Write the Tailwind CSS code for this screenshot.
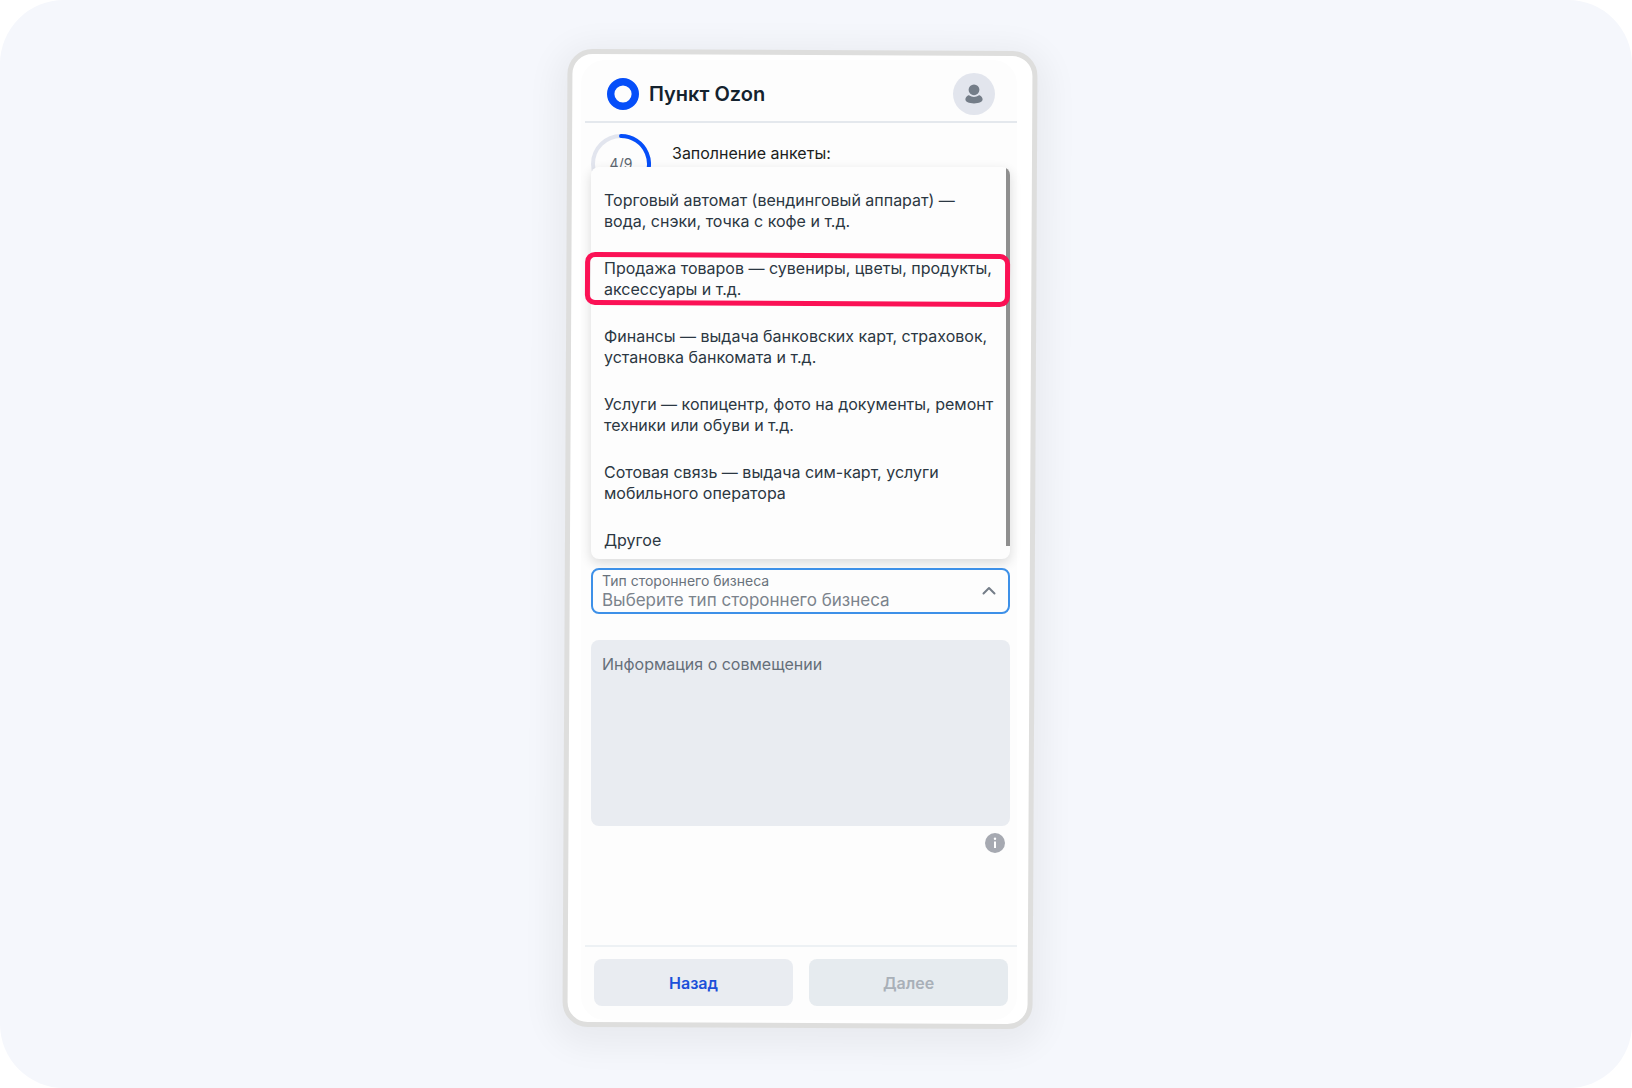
<!DOCTYPE html>
<html lang="ru">
<head>
    <meta charset="UTF-8">
    <meta name="viewport" content="width=device-width, initial-scale=1.0">
    <title>Пункт Ozon</title>
    <script src="https://cdn.jsdelivr.net/npm/@tailwindcss/browser@4"></script>
</head>
<body class="bg-white font-['Inter','Noto_Sans',sans-serif] text-[#2b3742]">
    <main class="flex min-h-screen justify-center rounded-[64px] bg-[#f5f7fc] pt-[50px] pr-8 pb-[60px]">
        <div class="relative flex w-[470px] flex-col pt-[10px] pr-[18px] pb-2 pl-4">
            <!-- Phone frame, slightly tilted -->
            <div class="absolute inset-0 rotate-[0.3deg] rounded-[25px] border-[5px] border-[#dededd] bg-white shadow-[0_8px_32px_12px_rgba(0,0,0,0.05)]"></div>

            <div class="relative flex grow flex-col rounded-[24px] bg-[#fdfdfd]">
                <!-- Header -->
                <header class="ml-1 flex h-[63px] items-center border-b-2 border-[#e4e8ed] px-[22px] pt-[7px]">
                    <svg class="size-8" viewBox="0 0 32 32" fill="none">
                        <circle cx="16" cy="16" r="12.3" stroke="#054ef9" stroke-width="7.4"/>
                    </svg>
                    <h1 class="ml-[10px] text-[20px] leading-6 font-semibold text-[#14222e]">Пункт Ozon</h1>
                    <button type="button" aria-label="Профиль" class="ml-auto flex size-[42px] items-center justify-center rounded-full bg-[#e2e5ed]">
                        <svg class="size-5" viewBox="0 0 20 20" fill="#747d88">
                            <circle cx="10" cy="5.8" r="5.4"/>
                            <path d="M5.400 11.500C6.700 12.400 8.300 12.900 10 12.900s3.300-.5 4.600-1.400c.5-.3.900-.2 1.400.1 1.600.9 2.600 2.400 2.600 4 0 2.400-3.400 3.800-8.600 3.800s-8.600-1.400-8.600-3.800c0-1.600 1-3.100 2.600-4 .5-.3.900-.4 1.400-.1z"/>
                        </svg>
                    </button>
                </header>

                <form class="flex grow flex-col">
                    <div class="flex grow flex-col pr-[7px] pl-[10px]">
                        <!-- Progress -->
                        <div class="flex items-start gap-[21px] pt-[11px]">
                            <div class="relative size-[60px]">
                                <svg class="size-full" viewBox="0 0 60 60" fill="none" stroke-width="4">
                                    <circle cx="30" cy="30" r="28" stroke="#e2e5ee"/>
                                    <path d="M30 2a28 28 0 0 1 20 47.600" stroke="#054ef9" stroke-linecap="round"/>
                                </svg>
                                <span class="absolute inset-0 flex items-center justify-center text-[14px] leading-[18px] text-[#5c6670]">4/9</span>
                            </div>
                            <p class="pt-2 text-[16px] leading-[22px] text-[#1c1e20]">Заполнение анкеты:</p>
                        </div>

                        <!-- Open list of options -->
                        <div class="relative -mt-[27px] flex h-[392px] overflow-hidden rounded-lg bg-[#fdfdfd] shadow-[0_4px_12px_rgba(0,0,0,0.14)]">
                            <ul role="listbox" aria-label="Тип стороннего бизнеса" class="flex grow flex-col gap-[26px] pt-[23px] pl-[13px] text-[16px] leading-[21px] whitespace-nowrap">
                                <li role="option">Торговый автомат (вендинговый аппарат) —<br>вода, снэки, точка с кофе и т.д.</li>
                                <li role="option">Продажа товаров — сувениры, цветы, продукты,<br>аксессуары и т.д.</li>
                                <li role="option">Финансы — выдача банковских карт, страховок,<br>установка банкомата и т.д.</li>
                                <li role="option">Услуги — копицентр, фото на документы, ремонт<br>техники или обуви и т.д.</li>
                                <li role="option">Сотовая связь — выдача сим-карт, услуги<br>мобильного оператора</li>
                                <li role="option">Другое</li>
                            </ul>
                            <div class="mb-[13px] w-1 shrink-0 bg-[#8f8f8f]"></div>
                        </div>

                        <div class="relative mt-[9px] h-[46px] rounded-lg border-2 border-[#3d90e8] bg-[#fdfdfd] px-[9px] pt-[2px]">
                            <label for="business" class="block text-[14px] leading-[18px] text-[#69727c]">Тип стороннего бизнеса</label>
                            <select id="business" class="block w-full appearance-none bg-transparent text-[17px] leading-5 text-[#7b838c]">
                                <option>Выберите тип стороннего бизнеса</option>
                            </select>
                            <svg class="pointer-events-none absolute top-[13px] right-[11px] size-4" viewBox="0 0 16 16" fill="none" stroke="#747d88" stroke-width="2" stroke-linecap="round" stroke-linejoin="round">
                                <path d="M2.500 10.500 8 5l5.500 5.500"/>
                            </svg>
                        </div>

                        <textarea aria-label="Информация о совмещении" placeholder="Информация о совмещении" class="mt-[26px] block h-[186px] w-full resize-none rounded-lg bg-[#e9ecf1] px-[11px] py-[13px] text-[16px] leading-[22px] placeholder:text-[#656f79]"></textarea>

                        <button type="button" aria-label="Подсказка" class="mt-[7px] mr-[5px] self-end">
                            <svg class="size-5" viewBox="0 0 20 20">
                                <circle cx="10" cy="10" r="10" fill="#a6a9b1"/>
                                <circle cx="10" cy="5.700" r="1.200" fill="#fff"/>
                                <path d="M9 8.500h2V15H9z" fill="#fff"/>
                            </svg>
                        </button>
                    </div>

                    <!-- Bottom buttons -->
                    <footer class="ml-1 flex gap-4 border-t-2 border-[#edf1f4] pt-3 pr-[9px] pb-[14px] pl-[9px] text-[16px] font-semibold">
                        <button type="button" class="h-[47px] flex-1 rounded-lg bg-[#e9ecf1] text-[#1c50d9]">Назад</button>
                        <button type="submit" disabled class="h-[47px] flex-1 rounded-lg bg-[#e6ebef] text-[#a9b0b8]">Далее</button>
                    </footer>
                </form>
            </div>

            <!-- Highlight around the second option -->
            <div class="pointer-events-none absolute top-[203px] right-[25px] left-5 h-[53px] rotate-[0.3deg] rounded-[10px] border-[5px] border-[#fb1155]"></div>
        </div>
    </main>
</body>
</html>
